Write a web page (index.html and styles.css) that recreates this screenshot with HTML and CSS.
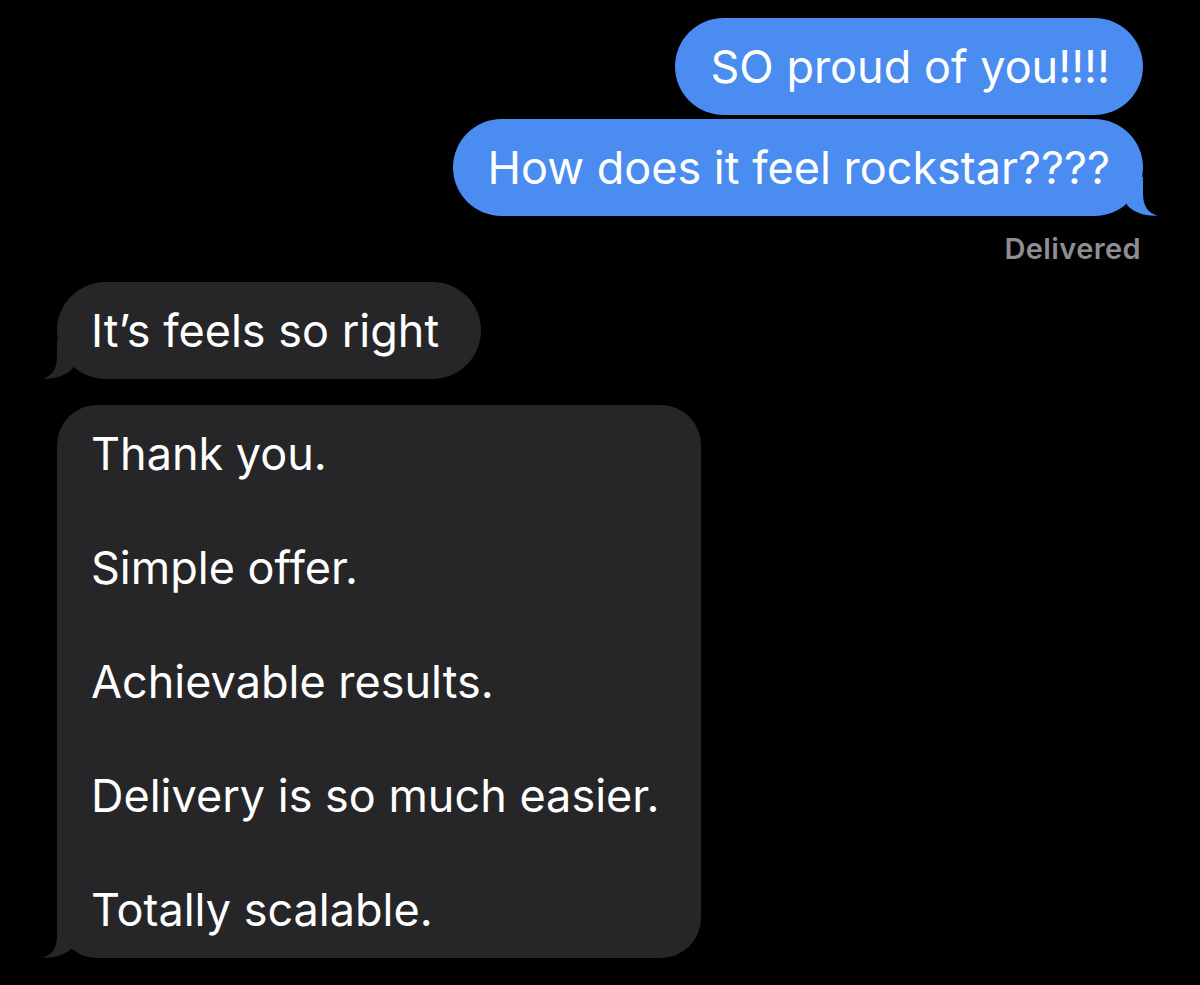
FILE: index.html
```html
<!DOCTYPE html>
<html lang="en">
<head>
<meta charset="utf-8">
<title>Messages</title>
<link rel="stylesheet" href="styles.css">
</head>
<body>
<div class="thread">
  <div class="row out">
    <div class="bubble blue">SO proud of you!!!!</div>
  </div>
  <div class="row out gap-s">
    <div class="bubble blue">How does it feel rockstar????<svg class="tail tail-r" viewBox="0 0 50 40" width="50" height="40"><path d="M17,0 L17,16 C17,30 12,36 2,38.6 C14,39.6 26,36 33,28 L33,0 Z"/></svg></div>
  </div>
  <div class="status">Delivered</div>
  <div class="row in">
    <div class="bubble gray">It’s feels so right<svg class="tail tail-l" viewBox="0 0 50 40" width="50" height="40"><path d="M17,0 L17,16 C17,30 12,36 2,38.6 C14,39.6 26,36 33,28 L33,0 Z"/></svg></div>
  </div>
  <div class="row in gap-m">
    <div class="bubble gray big">Thank you.<br><br>Simple offer.<br><br>Achievable results.<br><br>Delivery is so much easier.<br><br>Totally scalable.<svg class="tail tail-l" viewBox="0 0 50 40" width="50" height="40"><path d="M17,0 L17,16 C17,30 12,36 2,38.6 C14,39.6 26,36 33,28 L33,0 Z"/></svg></div>
  </div>
</div>
</body>
</html>
```
FILE: styles.css
```css
html, body {
  margin: 0;
  padding: 0;
  background: #000;
}

body {
  font-family: "Inter", "Liberation Sans", sans-serif;
  color: #fff;
}

.thread {
  display: flex;
  flex-direction: column;
  padding: 18px 57px 0 57px;
}

.row {
  display: flex;
}

.row.out {
  justify-content: flex-end;
}

.row.in {
  justify-content: flex-start;
}

.gap-s {
  margin-top: 4px;
}

.gap-m {
  margin-top: 26px;
}

.bubble {
  position: relative;
  font-size: 45px;
  line-height: 57px;
  padding: 20px 33px 20px 35px;
  border-radius: 48.5px;
  white-space: nowrap;
}

.bubble.blue {
  background: #4a8cf0;
}

.bubble.gray {
  background: #262628;
  padding-left: 34px;
  padding-right: 42px;
}

.bubble.big {
  border-radius: 40px;
}

.tail {
  position: absolute;
  bottom: -1px;
  display: block;
}

.tail-l {
  left: -17px;
}

.tail-r {
  right: -17px;
  transform: scaleX(-1);
}

.blue .tail path {
  fill: #4a8cf0;
}

.gray .tail path {
  fill: #262628;
}

.status {
  align-self: flex-end;
  margin: 18px 2px 18px 0;
  font-size: 29px;
  line-height: 30px;
  font-weight: 600;
  letter-spacing: 0.4px;
  color: #8d8d92;
}
```
